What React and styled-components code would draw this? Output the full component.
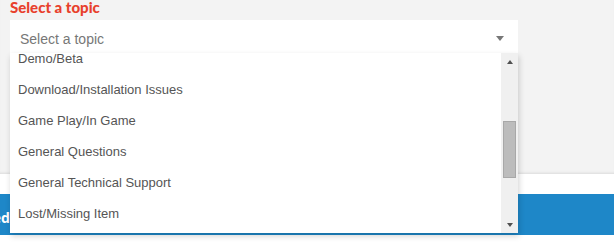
import styled, { createGlobalStyle } from 'styled-components';

const GlobalStyle = createGlobalStyle`
  html, body {
    margin: 0;
    padding: 0;
    background: #fff;
    font-family: "Liberation Sans", Arial, sans-serif;
  }
`

const topics = [
  'Demo/Beta',
  'Download/Installation Issues',
  'Game Play/In Game',
  'General Questions',
  'General Technical Support',
  'Lost/Missing Item',
  'Other',
];

const StyledPage = styled.div`
  width: 614px;
  height: 245px;
  overflow: hidden;
`
const StyledTopicSection = styled.section`
  position: relative;
  height: 174px;
  padding: 0 10px;
  box-sizing: border-box;
  background-color: #f3f3f3;
  box-shadow: inset 0 -3px 3px -2px rgba(0, 0, 0, 0.1);
`
const StyledLabel = styled.h3`
  margin: 0;
  height: 20px;
  color: #e8402c;
  font-family: Lato, "Open Sans", sans-serif;
  font-weight: 900;
  font-size: 15px;
  line-height: 14px;
`
const StyledSelectWrap = styled.div`
  position: relative;
  width: 508px;
`
const StyledSelect = styled.div`
  display: flex;
  align-items: center;
  justify-content: space-between;
  height: 33px;
  padding: 5px 14px 0 10px;
  box-sizing: border-box;
  background-color: #fff;
  color: #777;
  font-size: 14px;
`
const StyledCaret = styled.span`
  width: 0;
  height: 0;
  margin-top: -2px;
  border-left: 4.5px solid transparent;
  border-right: 4.5px solid transparent;
  border-top: 5px solid #777;
`
const StyledDropDown = styled.div`
  position: absolute;
  top: 33px;
  left: 0;
  z-index: 5;
  display: flex;
  width: 508px;
  height: 180px;
  background-color: #fff;
  box-shadow: 1px 3px 6px rgba(0, 0, 0, 0.18);
`
const StyledOptionList = styled.ul`
  flex: 1;
  margin: 0;
  padding: 0;
  overflow: hidden;
  list-style: none;
`
const StyledOption = styled.li`
  height: 31px;
  padding: 2px 0 0 8px;
  box-sizing: border-box;
  display: flex;
  align-items: center;
  color: #555;
  font-size: 13px;
  &:first-child {
    margin-top: -11px;
  }
`
const StyledScrollBar = styled.div`
  width: 17px;
  display: flex;
  flex-direction: column;
  background-color: #f0f0f0;
`
const StyledScrollButton = styled.div`
  height: 17px;
  display: flex;
  align-items: center;
  justify-content: center;
  &::after {
    content: '';
    width: 0;
    height: 0;
    border-left: 3.5px solid transparent;
    border-right: 3.5px solid transparent;
    ${({ $up }) => ($up ? 'border-bottom: 4px solid #505050;' : 'border-top: 4px solid #505050;')}
  }
`
const StyledTrack = styled.div`
  flex: 1;
  padding-top: 51px;
`
const StyledThumb = styled.div`
  width: 13px;
  height: 57px;
  margin-left: 2px;
  box-sizing: border-box;
  background-color: #bcbcbc;
  border: 1px solid #a8a8a8;
`
const StyledGap = styled.div`
  height: 20px;
  background-color: #fff;
`
const StyledBand = styled.div`
  height: 41px;
  display: flex;
  align-items: center;
  background-color: #1e87c8;
  overflow: hidden;
`
const StyledBandText = styled.span`
  margin-left: -27px;
  padding-top: 6px;
  color: #fff;
  font-family: "Open Sans", sans-serif;
  font-weight: 700;
  font-size: 14px;
`

function App() {
  return (
    <StyledPage>
      <GlobalStyle />
      <StyledTopicSection>
        <StyledLabel>Select a topic</StyledLabel>
        <StyledSelectWrap>
          <StyledSelect>
            Select a topic
            <StyledCaret />
          </StyledSelect>
          <StyledDropDown>
            <StyledOptionList>
              {topics.map((item) => (
                <StyledOption key={item}>{item}</StyledOption>
              ))}
            </StyledOptionList>
            <StyledScrollBar>
              <StyledScrollButton $up />
              <StyledTrack>
                <StyledThumb />
              </StyledTrack>
              <StyledScrollButton />
            </StyledScrollBar>
          </StyledDropDown>
        </StyledSelectWrap>
      </StyledTopicSection>
      <StyledGap />
      <StyledBand>
        <StyledBandText>Need help?</StyledBandText>
      </StyledBand>
    </StyledPage>
  );
}

export default App;
